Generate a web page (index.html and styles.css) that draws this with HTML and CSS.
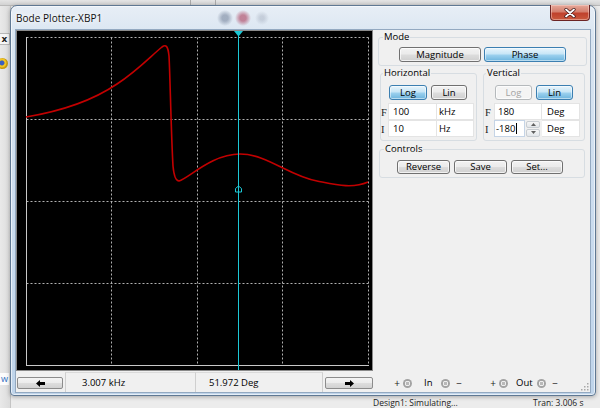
FILE: index.html
```html
<!DOCTYPE html>
<html>
<head>
<meta charset="utf-8">
<title>Bode Plotter-XBP1</title>
<link rel="stylesheet" href="styles.css">
</head>
<body>
<div class="desktop">
  <div class="topband"><span class="tick t1"></span><span class="tick t2"></span></div>
  <div class="side">
    <div class="side-tab">x</div>
    <div class="side-icon"></div>
    <div class="side-w">w</div>
  </div>
  <div class="status-line">
    <span class="st1">Design1: Simulating...</span>
    <span class="st2">Tran: 3.006 s</span>
  </div>

  <div class="window">
    <div class="titlebar">
      <span class="title">Bode Plotter-XBP1</span>
      <div class="close">
        <svg width="14" height="10" viewBox="0 0 14 10"><path d="M3,1.5 L11,8.5 M11,1.5 L3,8.5" stroke="#3a1010" stroke-width="3.2" stroke-linecap="round"/><path d="M3,1.5 L11,8.5 M11,1.5 L3,8.5" stroke="#ffffff" stroke-width="1.8" stroke-linecap="round"/></svg>
      </div>
    </div>
    <div class="client">
      <div class="main">
        <div class="plot">
          <svg width="355" height="339" viewBox="0 0 355 339">
            <g stroke="#b0b0b0" stroke-width="1" stroke-dasharray="2 2" fill="none">
              <line x1="9.5" y1="6.5" x2="351.5" y2="6.5"/>
              <line x1="9.5" y1="88.5" x2="351.5" y2="88.5"/>
              <line x1="9.5" y1="170.5" x2="351.5" y2="170.5"/>
              <line x1="9.5" y1="252.5" x2="351.5" y2="252.5"/>
              <line x1="94.5" y1="6.5" x2="94.5" y2="334.5"/>
              <line x1="180.5" y1="6.5" x2="180.5" y2="334.5"/>
              <line x1="265.5" y1="6.5" x2="265.5" y2="334.5"/>
              <line x1="351.5" y1="6.5" x2="351.5" y2="334.5"/>
            </g>
            <g stroke="#c8c8c8" stroke-width="1" fill="none">
              <line x1="9.5" y1="6" x2="9.5" y2="335"/>
              <line x1="9" y1="334.5" x2="352" y2="334.5"/>
            </g>
            <path d="M9,86 C45,80 75,70 100,53 C120,40 135,24 145,16 C149,13 151,15 152,25 C153,40 154,100 156,135 C157,146 159,150 162,150 C172,147 195,123 223,123 C250,123 272,145 300,150 C318,153.5 335,158 351,151" stroke="#c20000" stroke-width="1.6" fill="none"/>
            <line x1="221.5" y1="0" x2="221.5" y2="339" stroke="#1cc8d6" stroke-width="1"/>
            <polygon points="217,0 226,0 221.5,5.5" fill="#1cc8d6"/>
            <path d="M218.5,161 L218.5,157.5 L221.5,155 L224.5,157.5 L224.5,161 Z" stroke="#1cc8d6" stroke-width="1" fill="none"/>
          </svg>
        </div>
        <div class="panel">
          <div class="group mode">
            <span class="legend">Mode</span>
            <div class="btnrow mode-row">
              <div class="btn w82">Magnitude</div>
              <div class="btn on w82">Phase</div>
            </div>
          </div>
          <div class="axes">
            <div class="group horiz">
              <span class="legend narrow">Horizontal</span>
              <div class="btnrow h-row">
                <div class="btn on w38">Log</div>
                <div class="btn w36">Lin</div>
              </div>
              <div class="frow first">
                <span class="lbl h-lbl">F</span>
                <span class="cell h-in">100</span>
                <span class="cell h-unit">kHz</span>
              </div>
              <div class="frow">
                <span class="lbl h-lbl">I</span>
                <span class="cell h-in">10</span>
                <span class="cell h-unit">Hz</span>
              </div>
            </div>
            <div class="group vert">
              <span class="legend narrow">Vertical</span>
              <div class="btnrow v-row">
                <div class="btn dis w37">Log</div>
                <div class="btn on w37">Lin</div>
              </div>
              <div class="frow first">
                <span class="lbl v-lbl">F</span>
                <span class="cell v-in">180</span>
                <span class="cell v-unit">Deg</span>
              </div>
              <div class="frow">
                <span class="lbl v-lbl">I</span>
                <span class="cell v-in short focus">-180<span class="caret"></span></span>
                <span class="spin">
                  <span class="spin-btn"><svg width="5" height="3" viewBox="0 0 5 3"><polygon points="0,3 5,3 2.5,0" fill="#606060"/></svg></span>
                  <span class="spin-btn"><svg width="5" height="3" viewBox="0 0 5 3"><polygon points="0,0 5,0 2.5,3" fill="#606060"/></svg></span>
                </span>
                <span class="cell v-unit">Deg</span>
              </div>
            </div>
          </div>
          <div class="group controls">
            <span class="legend">Controls</span>
            <div class="btnrow c-row">
              <div class="btn w53">Reverse</div>
              <div class="btn w53">Save</div>
              <div class="btn w52">Set...</div>
            </div>
          </div>
        </div>
      </div>
      <div class="bottombar">
        <div class="arrowbtn left">
          <svg width="9" height="7" viewBox="0 0 9 7"><polygon points="0,3.5 4,0 4,2 9,2 9,5 4,5 4,7" fill="#000"/></svg>
        </div>
        <div class="fields">
          <span class="fld f1">3.007 kHz</span>
          <span class="fld f2">51.972 Deg</span>
        </div>
        <div class="arrowbtn right">
          <svg width="9" height="7" viewBox="0 0 9 7"><polygon points="9,3.5 5,0 5,2 0,2 0,5 5,5 5,7" fill="#000"/></svg>
        </div>
        <div class="term in-term">
          <span class="sym">+</span>
          <span class="pin p1"></span>
          <span class="tlabel l-in">In</span>
          <span class="pin p2"></span>
          <span class="sym minus">−</span>
        </div>
        <div class="term out-term">
          <span class="sym">+</span>
          <span class="pin p1"></span>
          <span class="tlabel l-out">Out</span>
          <span class="pin p3"></span>
          <span class="sym minus">−</span>
        </div>
        <svg class="grip" width="8" height="8" viewBox="0 0 8 8">
          <g fill="#a8a8a8"><rect x="6" y="0" width="1.5" height="1.5"/><rect x="3" y="3" width="1.5" height="1.5"/><rect x="6" y="3" width="1.5" height="1.5"/><rect x="0" y="6" width="1.5" height="1.5"/><rect x="3" y="6" width="1.5" height="1.5"/><rect x="6" y="6" width="1.5" height="1.5"/></g>
        </svg>
      </div>
    </div>
  </div>
</div>
</body>
</html>
```

FILE: styles.css
```css
* { box-sizing: border-box; }

html, body {
  margin: 0;
  padding: 0;
}

body {
  width: 600px;
  height: 408px;
  overflow: hidden;
  font-family: "Open Sans", "DejaVu Sans", sans-serif;
  font-size: 9px;
  color: #000;
}

.desktop {
  position: relative;
  width: 600px;
  height: 408px;
  background: #ececec;
  overflow: hidden;
}

.topband {
  position: absolute;
  left: 0;
  top: 0;
  width: 600px;
  height: 6px;
  background: linear-gradient(#e4e4e4, #d2d2d2);
  border-bottom: 1px solid #b9b9b9;
}

.tick {
  position: absolute;
  top: 0;
  width: 1px;
  height: 5px;
  background: #a9a9a9;
}
.t1 { left: 190px; }
.t2 { left: 215px; }

.side {
  position: absolute;
  left: 0;
  top: 6px;
  width: 11px;
  height: 402px;
  background: linear-gradient(90deg, #e9e9e9, #dcdcdc);
  border-right: 1px solid #c4c4c4;
}

.side-tab {
  position: absolute;
  left: 0;
  top: 27px;
  width: 10px;
  height: 12px;
  background: #f6f6f6;
  border: 1px solid #b8b8b8;
  border-left: none;
  font-family: "DejaVu Sans", sans-serif;
  font-size: 9px;
  font-weight: bold;
  line-height: 10px;
  text-align: center;
  color: #222;
}

.side-icon {
  position: absolute;
  left: -3px;
  top: 52px;
  width: 11px;
  height: 11px;
  border-radius: 50%;
  background: radial-gradient(circle at 45% 45%, #3a5fc0 0 2px, #f2c623 3px 4px, #c89a10 5px);
}

.side-w {
  position: absolute;
  left: 0;
  top: 367px;
  width: 9px;
  height: 12px;
  background: #fdfdfd;
  color: #2d6cc0;
  font-size: 9px;
  line-height: 12px;
  text-align: center;
}

.status-line {
  position: absolute;
  left: 0;
  top: 397px;
  width: 600px;
  height: 11px;
  font-family: "Open Sans", sans-serif;
  font-size: 8.5px;
  line-height: 11px;
  color: #222;
}
.st1 { position: absolute; left: 373px; }
.st2 { position: absolute; left: 533px; }

.window {
  position: absolute;
  left: 10px;
  top: 5px;
  width: 586px;
  height: 391px;
  border: 1px solid #5f7893;
  border-radius: 7px 7px 4px 4px;
  background: linear-gradient(180deg, #e7eef6 0%, #d9e5f1 8%, #c9dbee 60%, #bfd4ea 100%);
  box-shadow: 0 1px 4px rgba(0, 0, 0, 0.3), inset 0 0 0 1px rgba(255, 255, 255, 0.6);
  padding: 0 5px 3px 5px;
  display: flex;
  flex-direction: column;
}

.titlebar {
  position: relative;
  height: 24px;
  display: flex;
  align-items: center;
  padding-bottom: 1px;
  background:
    radial-gradient(circle at 209px 12px, rgba(110, 125, 150, 0.55) 0 3px, rgba(110, 125, 150, 0) 8px),
    radial-gradient(circle at 227px 12px, rgba(170, 60, 90, 0.6) 0 3px, rgba(170, 60, 90, 0) 8px),
    radial-gradient(circle at 246px 12px, rgba(130, 140, 160, 0.3) 0 2px, rgba(130, 140, 160, 0) 7px);
}

.title {
  font-family: "Open Sans", sans-serif;
  font-size: 10px;
  color: #111;
  text-shadow: 0 0 5px #fff, 0 0 8px #fff;
  letter-spacing: 0.05px;
}

.close {
  position: absolute;
  right: 0;
  top: -1px;
  width: 40px;
  height: 16px;
  border: 1px solid #6c2424;
  border-top: none;
  border-radius: 0 0 4px 4px;
  background: linear-gradient(180deg, #e6a89a 0%, #d47f6d 45%, #c0412c 55%, #c95a3e 100%);
  box-shadow: inset 0 0 0 1px rgba(255, 220, 210, 0.45);
  display: flex;
  align-items: center;
  justify-content: center;
}

.close svg { display: block; }

.client {
  height: 362px;
  background: #f0f0f0;
  display: flex;
  flex-direction: column;
  position: relative;
  box-shadow: 0 0 0 1px #93a9c1;
}

.main {
  height: 342px;
  display: flex;
}

.plot {
  width: 357px;
  height: 341px;
  border: 1px solid #8a8a8a;
  background: #000;
}

.plot svg { display: block; }

.panel {
  flex: 1;
  display: flex;
  flex-direction: column;
}

.group {
  border: 1px solid #d7dde2;
  border-radius: 3px;
  display: flex;
  flex-direction: column;
}

.legend {
  align-self: flex-start;
  height: 12px;
  line-height: 12px;
  margin: -7px 0 0 4px;
  padding: 0 1px;
  background: #f0f0f0;
  font-size: 9.5px;
}

.legend.narrow { margin-left: 2px; }

.mode {
  margin: 7px 3px 0 5px;
}

.btnrow {
  display: flex;
}

.mode-row {
  margin-top: 4px;
  padding-left: 20px;
  gap: 3px;
  padding-bottom: 3px;
}

.btn {
  height: 15px;
  border: 1px solid #707070;
  border-radius: 3px;
  background: linear-gradient(180deg, #f2f2f2 0%, #ebebeb 48%, #dddddd 52%, #cfcfcf 100%);
  box-shadow: inset 0 0 0 1px rgba(255, 255, 255, 0.7);
  display: flex;
  align-items: center;
  justify-content: center;
  font-size: 9.5px;
  line-height: 1;
  color: #000;
}

.btn.on {
  border-color: #3c7fb1;
  background: linear-gradient(180deg, #e8f5fc 0%, #c6e5f6 48%, #9ed2ef 52%, #6cb4dd 100%);
  box-shadow: inset 0 0 0 1px rgba(255, 255, 255, 0.5);
}

.btn.dis {
  border-color: #b5b9bc;
  background: #f4f4f4;
  color: #a3a3a3;
}

.w82 { width: 82px; }
.w38 { width: 38px; }
.w37 { width: 37px; }
.w36 { width: 36px; }
.w53 { width: 53px; height: 14px; }
.w52 { width: 52px; height: 14px; }

.axes {
  display: flex;
  gap: 6px;
  margin: 7px 0 0 7px;
}

.horiz { width: 97px; padding-bottom: 3px; }
.vert { width: 102px; padding-bottom: 3px; }

.h-row {
  margin-top: 6px;
  padding-left: 8px;
  gap: 4px;
}

.v-row {
  margin-top: 6px;
  padding-left: 11px;
  gap: 4px;
}

.frow {
  display: flex;
  align-items: center;
  height: 17px;
}

.frow.first { margin-top: 3px; }

.lbl {
  font-family: "Liberation Serif", serif;
  font-size: 10.5px;
  line-height: 17px;
  padding-top: 2px;
  color: #222;
}

.h-lbl { width: 7px; }
.v-lbl { width: 10px; padding-left: 1px; }

.cell {
  height: 17px;
  background: #fff;
  border: 1px solid #e4e4e4;
  display: flex;
  align-items: center;
  font-size: 9.5px;
  white-space: nowrap;
}

.h-in { width: 49px; padding-left: 4px; }
.h-unit { width: 37px; padding-left: 2px; border-left: none; }
.v-in { width: 48px; padding-left: 3px; }
.v-unit { width: 38px; padding-left: 5px; border-left: none; }

.v-in.short { width: 31px; padding-left: 1px; }
.v-in.focus { border-color: #c5d4e6; }

.caret {
  display: inline-block;
  width: 1px;
  height: 11px;
  margin-left: 1px;
  background: #000;
}

.spin {
  width: 14px;
  height: 16px;
  margin: 0 2px 0 1px;
  display: flex;
  flex-direction: column;
  gap: 1px;
}

.spin-btn {
  flex: 1;
  border: 1px solid #c8cdd2;
  border-radius: 2px;
  background: linear-gradient(#f6f6f6, #e2e6ea);
  display: flex;
  align-items: center;
  justify-content: center;
}

.spin-btn svg { display: block; }

.controls {
  margin: 8px 5px 0 6px;
}

.c-row {
  margin-top: 5px;
  padding-left: 17px;
  gap: 4px;
  padding-bottom: 3px;
}

.bottombar {
  position: relative;
  height: 20px;
  display: flex;
  align-items: flex-start;
  padding-top: 5px;
}

.arrowbtn {
  width: 46px;
  height: 12px;
  border: 1px solid #8c8c8c;
  border-radius: 2px;
  background: linear-gradient(180deg, #f4f4f4 0%, #ececec 48%, #dedede 52%, #d2d2d2 100%);
  display: flex;
  align-items: center;
  justify-content: center;
}

.arrowbtn svg { display: block; }

.arrowbtn.left { margin-left: 1px; }
.arrowbtn.right { margin-left: 2px; width: 48px; }

.fields {
  display: flex;
  margin: -5px 0 0 2px;
  height: 20px;
}

.fld {
  height: 20px;
  display: flex;
  align-items: center;
  border-left: 1px solid #cfcfcf;
  border-top: 1px solid #dadada;
  font-size: 9.5px;
}

.f1 { width: 130px; padding-left: 16px; }
.f2 { width: 128px; padding-left: 13px; border-right: 1px solid #cfcfcf; }

.term {
  display: flex;
  align-items: center;
  height: 12px;
}

.in-term { margin-left: 21px; }
.out-term { margin-left: 28px; }

.sym {
  width: 6px;
  text-align: center;
  font-size: 10px;
  line-height: 12px;
  color: #222;
}

.sym.minus { margin-left: 6px; }

.pin {
  width: 9px;
  height: 9px;
  border-radius: 50%;
  margin-left: 3px;
  background: radial-gradient(circle, #b9b9b9 0 1.6px, #eeeeee 2px 2.6px, #a3a3a3 3px 4.5px);
}

.tlabel {
  font-size: 9.5px;
  line-height: 12px;
}

.l-in { margin-left: 12px; width: 9px; }
.l-out { margin-left: 8px; width: 18px; }
.p2 { margin-left: 8px; }
.p3 { margin-left: 3px; }

.grip {
  position: absolute;
  right: 1px;
  bottom: 1px;
  display: block;
}
```
